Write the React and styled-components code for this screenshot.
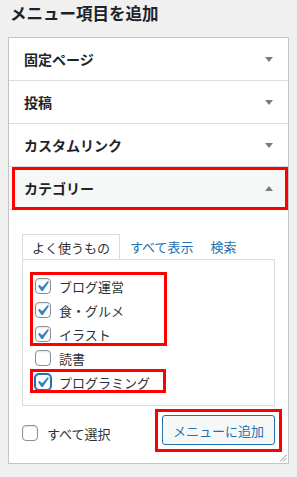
import React from 'react';
import styled, { createGlobalStyle } from 'styled-components';

const GlobalStyle = createGlobalStyle`
  body {
    margin: 0;
    background: #f0f0f1;
    font-family: "Noto Sans CJK JP", "Noto Sans", sans-serif;
    color: #1d2327;
  }
`;

const Page = styled.div`
  width: 297px;
  padding: 0 8px;
  box-sizing: border-box;
`;

const Title = styled.h2`
  margin: 0 0 10px 2px;
  font-size: 16.5px;
  line-height: 27px;
  font-weight: 700;
  color: #1d2327;
`;

const Panel = styled.div`
  position: relative;
  width: 281px;
  box-sizing: border-box;
  background: #fff;
  border: 1px solid #c3c4c7;
  box-shadow: 0 1px 1px rgba(0, 0, 0, 0.04);
`;

const SectionRow = styled.div`
  position: relative;
  height: 42px;
  display: flex;
  align-items: center;
  justify-content: space-between;
  padding: 0 15px 0 15px;
  border-bottom: 1px solid #dcdcde;
  background: ${(p) => (p.$open ? '#f6f7f7' : '#fff')};
  font-size: 14px;
  font-weight: 700;
`;

// red annotation boxes drawn over the content
const Highlight = styled.span`
  position: absolute;
  top: ${(p) => p.$t}px;
  left: ${(p) => p.$l}px;
  right: ${(p) => p.$r}px;
  bottom: ${(p) => p.$b}px;
  border: 3px solid #ff0000;
  pointer-events: none;
`;

const Arrow = ({ up }) => (
  <svg width="8" height="5" viewBox="0 0 8 5">
    <polygon points={up ? '0,5 8,5 4,0' : '0,0 8,0 4,5'} fill="#787c82" />
  </svg>
);

const SectionBody = styled.div`
  padding: 24px 13px 18px;
`;

const Tabs = styled.div`
  display: flex;
  align-items: flex-end;
  height: 25px;
`;

const Tab = styled.span`
  height: 25px;
  box-sizing: border-box;
  display: flex;
  align-items: center;
  font-size: 13px;
  ${(p) =>
    p.$active
      ? `
    padding: 0 9px;
    border: 1px solid #dcdcde;
    border-bottom: none;
    color: #2c3338;
  `
      : `
    padding: 0 0 0 10px;
    margin-right: 7px;
    color: #2271b1;
  `}
`;

const TabPanel = styled.div`
  border: 1px solid #dcdcde;
  padding: 14px 0 11px 12px;
`;

const Group = styled.div`
  position: relative;
`;

const Item = styled.label`
  position: relative;
  display: flex;
  align-items: center;
  gap: 8px;
  height: 24px;
  font-size: 13px;
  color: #2c3338;
`;

const Box = styled.span`
  position: relative;
  width: 16px;
  height: 16px;
  box-sizing: border-box;
  flex-shrink: 0;
  border: 1px solid ${(p) => (p.$focus ? '#2271b1' : '#8c8f94')};
  border-radius: 4px;
  background: #fff;
  box-shadow: ${(p) => (p.$focus ? '0 0 0 1px #2271b1' : 'inset 0 1px 2px rgba(0,0,0,0.1)')};

  svg {
    position: absolute;
    left: -4px;
    top: -3px;
  }
`;

const Check = ({ checked, focus }) => (
  <Box $focus={focus}>
    {checked && (
      <svg width="21" height="21" viewBox="0 0 20 20">
        <path d="M14.83 4.89l1.34.94-5.81 8.38H9.02L5.78 9.67l1.34-1.25 2.57 2.4z" fill="#3582c4" />
      </svg>
    )}
  </Box>
);

const Footer = styled.div`
  display: flex;
  justify-content: space-between;
  align-items: flex-start;
  margin-top: 9px;
`;

const SelectAll = styled.label`
  display: flex;
  align-items: center;
  gap: 9px;
  margin-top: 10px;
  height: 16px;
  font-size: 13px;
  color: #2c3338;
`;

const ButtonWrap = styled.div`
  position: relative;
`;

const Button = styled.button`
  width: 113px;
  height: 30px;
  box-sizing: border-box;
  border: 1px solid #2271b1;
  border-radius: 3px;
  background: #f6f7f7;
  color: #2271b1;
  font-family: inherit;
  font-size: 13px;
  padding: 0;
`;

const Resize = styled.svg`
  position: absolute;
  right: 1px;
  bottom: 1px;
`;

const sections = ['固定ページ', '投稿', 'カスタムリンク'];

const App = () => {
  return (
    <Page>
      <GlobalStyle />
      <Title>メニュー項目を追加</Title>
      <Panel>
        {sections.map((s) => (
          <SectionRow key={s}>
            {s}
            <Arrow />
          </SectionRow>
        ))}
        <SectionRow $open>
          カテゴリー
          <Arrow up />
          <Highlight $t={0} $l={3} $r={0} $b={-1} />
        </SectionRow>
        <SectionBody>
          <Tabs>
            <Tab $active>よく使うもの</Tab>
            <Tab>すべて表示</Tab>
            <Tab>検索</Tab>
          </Tabs>
          <TabPanel>
            <Group>
              <Item>
                <Check checked />
                ブログ運営
              </Item>
              <Item>
                <Check checked />
                食・グルメ
              </Item>
              <Item>
                <Check checked />
                イラスト
              </Item>
              <Highlight $t={-2} $l={-5} style={{ width: 131 }} $b={0} />
            </Group>
            <Item>
              <Check />
              読書
            </Item>
            <Group>
              <Item>
                <Check checked focus />
                プログラミング
              </Item>
              <Highlight $t={-1} $l={-5} style={{ width: 130 }} $b={1} />
            </Group>
          </TabPanel>
          <Footer>
            <SelectAll>
              <Check />
              すべて選択
            </SelectAll>
            <ButtonWrap>
              <Button>メニューに追加</Button>
              <Highlight $t={-6} $l={-7} $r={-7} $b={-7} />
            </ButtonWrap>
          </Footer>
        </SectionBody>
        <Resize width="8" height="8" viewBox="0 0 8 8">
          <path d="M1 7.5L7.5 1M4 7.5L7.5 4" stroke="#8c8f94" strokeWidth="1" />
        </Resize>
      </Panel>
    </Page>
  );
};

export default App;
